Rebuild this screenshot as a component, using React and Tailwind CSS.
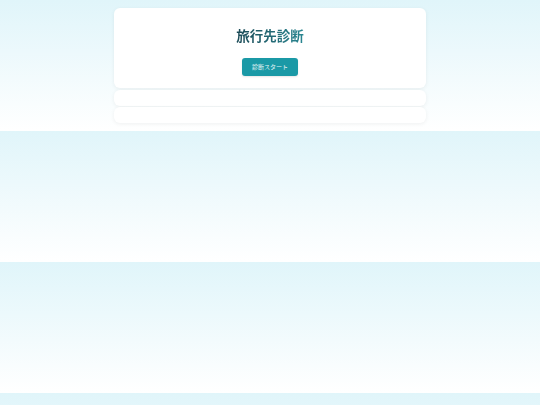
import { useEffect } from 'react';

const BODY_CLASSES = ['bg-gradient-to-b', 'from-[#e0f5fa]', 'to-white'];

export default function App() {
  useEffect(() => {
    document.body.classList.add(...BODY_CLASSES);
    return () => document.body.classList.remove(...BODY_CLASSES);
  }, []);

  return (
    <div className="px-2 pt-2 pb-2" style={{ fontFamily: '"Noto Sans CJK JP", "Noto Sans", sans-serif' }}>
      <div className="mx-auto w-[312px] flex flex-col gap-[1.5px]">
        <section className="bg-white rounded-[6px] shadow-[0_1px_4px_rgba(0,0,0,0.06)] pt-[17px] pb-[12px] flex flex-col items-center">
          <h1 className="text-[13.5px] leading-[20px] font-semibold bg-gradient-to-r from-[#1b4a56] to-[#2a8792] bg-clip-text text-transparent">
            旅行先診断
          </h1>
          <button className="mt-[13px] w-[56px] h-[18px] rounded-[3px] bg-[#1a99a6] text-white/90 text-[6px] leading-none font-normal shadow-[0_1px_2px_rgba(0,0,0,0.1)]">
            診断スタート
          </button>
        </section>
        <section className="bg-white rounded-[6px] shadow-[0_1px_4px_rgba(0,0,0,0.06)] h-[16px]" />
        <section className="bg-white rounded-[6px] shadow-[0_1px_4px_rgba(0,0,0,0.06)] h-[16px]" />
      </div>
    </div>
  );
}
